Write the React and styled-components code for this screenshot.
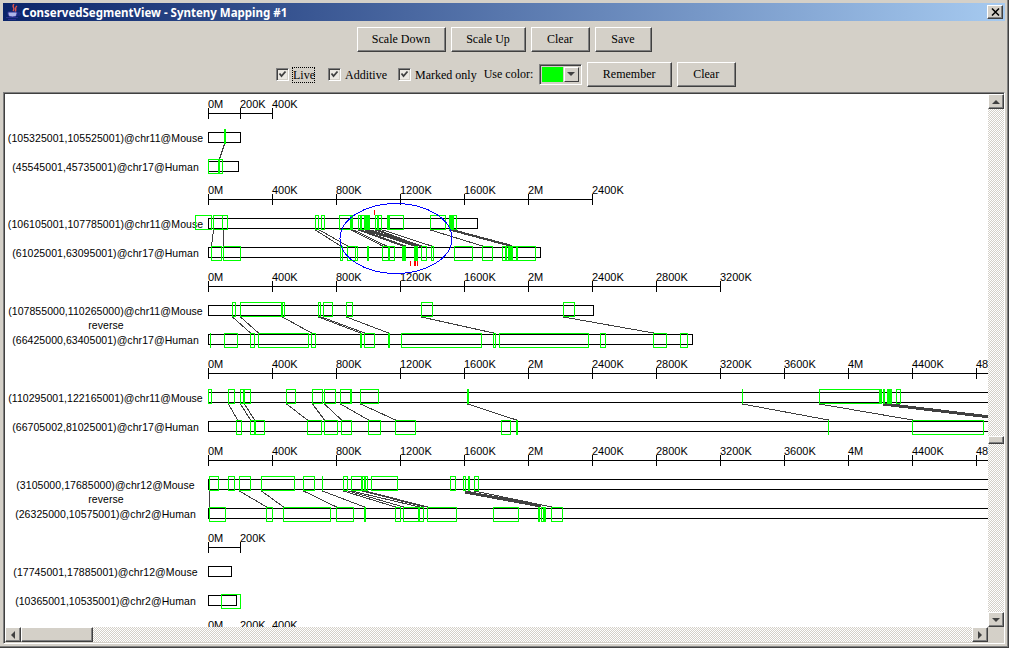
import React from 'react'
import styled, { createGlobalStyle } from 'styled-components'

const GlobalStyle = createGlobalStyle`
  html, body { margin: 0; padding: 0; background: #d4d0c8; }
  #root { width: 1009px; height: 648px; overflow: hidden; }
`

const checker = `
  background-color: #fff;
  background-image: conic-gradient(#d4d0c8 25%, #fff 0 50%, #d4d0c8 0 75%, #fff 0);
  background-size: 2px 2px;
`

const Window = styled.div`
  box-sizing: border-box;
  width: 1009px;
  height: 648px;
  display: flex;
  flex-direction: column;
  padding: 3px;
  background: #d4d0c8;
  border-right: 1px solid #404040;
  border-bottom: 1px solid #404040;
  box-shadow: inset -1px -1px 0 #808080;
`

const TitleBar = styled.div`
  height: 18px;
  flex: none;
  display: flex;
  align-items: center;
  padding: 0 2px;
  background: linear-gradient(90deg, #0a246a, #a6caf0);
`

const TitleIcon = styled.svg`
  width: 16px;
  height: 16px;
  flex: none;
`

const TitleText = styled.span`
  flex: 1;
  margin-left: 1px;
  font: bold 11.5px "Noto Sans", sans-serif;
  color: #fff;
  white-space: nowrap;
`

const CloseButton = styled.div`
  box-sizing: border-box;
  width: 16px;
  height: 14px;
  display: flex;
  align-items: center;
  justify-content: center;
  background: #d4d0c8;
  border: 1px solid;
  border-color: #fff #404040 #404040 #fff;
  box-shadow: inset -1px -1px 0 #808080;
`

const Toolbar = styled.div`
  flex: none;
  height: 36px;
  display: flex;
  justify-content: center;
  align-items: center;
  gap: 5px;
`

const OptionsBar = styled.div`
  flex: none;
  height: 35px;
  display: flex;
  align-items: center;
  padding-left: 273px;
`

const Button = styled.div`
  box-sizing: border-box;
  flex: none;
  width: ${({ w }) => w}px;
  height: 25px;
  margin-left: ${({ ml }) => ml || 0}px;
  display: flex;
  align-items: center;
  justify-content: center;
  background: #d4d0c8;
  border: 1px solid;
  border-color: #fff #404040 #404040 #fff;
  box-shadow: inset -1px -1px 0 #808080;
  font: 12px "Liberation Serif", serif;
  color: #000;
`

const CheckItem = styled.div`
  flex: none;
  display: flex;
  align-items: center;
  gap: 4px;
  margin-right: ${({ mr }) => mr}px;
  font: 12px "Liberation Serif", serif;
  color: #000;
`

const CheckBox = styled.div`
  box-sizing: border-box;
  width: 13px;
  height: 13px;
  display: flex;
  align-items: center;
  justify-content: center;
  background: #ece9e3;
  border: 1px solid;
  border-color: #808080 #fff #fff #808080;
  box-shadow: inset 1px 1px 0 #404040, inset -1px -1px 0 #d4d0c8;
`

const CheckLabel = styled.span`
  ${({ focused }) => focused && 'outline: 1px dotted #000; width: 21px;'}
  line-height: 14px;
  white-space: nowrap;
`

const ColorLabel = styled.span`
  flex: none;
  width: 55px;
  font: 12px "Liberation Serif", serif;
  color: #000;
  white-space: nowrap;
`

const Combo = styled.div`
  box-sizing: border-box;
  flex: none;
  width: 43px;
  height: 21px;
  display: flex;
  align-items: center;
  padding: 1px 2px;
  gap: 1px;
  border: 1px solid;
  border-color: #808080 #fff #fff #808080;
  box-shadow: inset 1px 1px 0 #404040;
  background: #d4d0c8;
`

const Swatch = styled.div`
  width: 21px;
  height: 15px;
  flex: none;
  background: #00ff00;
`

const ComboArrow = styled.div`
  box-sizing: border-box;
  width: 16px;
  height: 15px;
  display: flex;
  align-items: center;
  justify-content: center;
  border: 1px solid;
  border-color: #fff #404040 #404040 #fff;
`

const Viewport = styled.div`
  box-sizing: border-box;
  flex: 1;
  width: 1002px;
  display: grid;
  grid-template-columns: 983px 16px;
  grid-template-rows: 533px 15px;
  padding: 1px 0 0 1px;
  border: 1px solid;
  border-color: #808080 #fff #fff #808080;
  box-shadow: inset 1px 1px 0 #404040;
`

const Canvas = styled.svg`
  display: block;
  background: #fff;
`

const VScroll = styled.div`
  display: flex;
  flex-direction: column;
  ${checker}
`

const HScroll = styled.div`
  display: flex;
  ${checker}
`

const ScrollButton = styled.div`
  box-sizing: border-box;
  flex: none;
  width: 16px;
  height: 15px;
  display: flex;
  align-items: center;
  justify-content: center;
  background: #d4d0c8;
  border: 1px solid;
  border-color: #fff #404040 #404040 #fff;
  box-shadow: inset -1px -1px 0 #808080;
`

const ScrollThumb = styled.div`
  box-sizing: border-box;
  flex: none;
  background: #d4d0c8;
  border: 1px solid;
  border-color: #fff #404040 #404040 #fff;
  box-shadow: inset -1px -1px 0 #808080;
  ${({ vertical }) => vertical
    ? 'height: 8px; margin-top: 327px;'
    : 'width: 72px;'}
`

const Spacer = styled.div`
  flex: 1;
`

const Corner = styled.div`
  background: #d4d0c8;
`

const AxisText = styled.text`
  font: 11px "Liberation Sans", sans-serif;
`

const NameText = styled.text`
  font: 10.5px "Liberation Sans", sans-serif;
  letter-spacing: 0.06px;
`

const axisLabel = (i, step) => {
  const k = i * step
  if (k === 0) return '0M'
  if (k % 2000 === 0) return `${k / 1000}M`
  return `${k}K`
}

const rows = [
  {
    axis: 113, ticks: 3, step: 200, end: 272, top: 46, bars: [240, 238],
    name: ['(105325001,105525001)@chr11@Mouse', '(45545001,45735001)@chr17@Human'],
    upper: [[224, 226, 1]],
    lower: [[208, 219], [219, 223]],
    links: [[224, 219]]
  },
  {
    axis: 199, ticks: 7, step: 400, end: 592, top: 47, bars: [477, 540],
    name: ['(106105001,107785001)@chr11@Mouse', '(61025001,63095001)@chr17@Human'],
    upper: [[195, 212], [213, 223], [222, 228], [315, 319], [321, 325], [339, 351], [351, 353, 1], [358, 361], [361, 365], [365, 370, 1], [375, 378], [378, 382], [387, 388], [389, 404], [430, 446], [449, 453, 1], [453, 457]],
    lower: [[211, 222], [223, 241], [340, 343], [347, 358], [355, 358], [367, 369, 1], [382, 389], [389, 395], [402, 406, 1], [414, 415], [416, 418], [421, 427], [431, 434], [454, 473], [482, 493], [502, 506], [506, 509], [509, 512, 1], [512, 517], [517, 536]],
    links: [[213, 211], [223, 223], [315, 340], [319, 347], [351, 382], [353, 386], [358, 402], [361, 405], [365, 414], [368, 416], [370, 421], [375, 418], [378, 420], [382, 431], [430, 482], [453, 510], [451, 510], [449, 509]],
    heavy: [[[367, 231], [421, 246], 2], [[456, 231], [512, 246], 2]]
  },
  {
    axis: 286, ticks: 9, step: 400, end: 720, top: 47, bars: [593, 692], reverse: true,
    name: ['(107855000,110265000)@chr11@Mouse', '(66425000,63405001)@chr17@Human'],
    upper: [[232, 236], [240, 282], [282, 285], [318, 321], [323, 333], [346, 353], [421, 433], [563, 575]],
    lower: [[210, 211, 1], [224, 238], [250, 255], [258, 309], [311, 316], [360, 362, 1], [364, 375], [388, 390, 1], [401, 482], [493, 496], [499, 589], [600, 606], [653, 667], [680, 688]],
    links: [[232, 250], [240, 258], [282, 311], [318, 360], [321, 364], [346, 388], [421, 493], [563, 653]]
  },
  {
    axis: 373, ticks: 13, step: 400, end: 988, top: 47, bars: [1000, 1000],
    name: ['(110295001,122165001)@chr11@Mouse', '(66705002,81025001)@chr17@Human'],
    upper: [[208, 212], [228, 235], [240, 244], [244, 251], [286, 296], [312, 323], [324, 336], [340, 351], [350, 351], [360, 379], [467, 469, 1], [742, 743, 1], [819, 880], [879, 882, 1], [883, 885], [887, 892, 1], [896, 901]],
    lower: [[236, 242], [250, 255], [255, 265], [307, 322], [324, 338], [341, 352], [368, 381], [395, 416], [501, 511], [516, 518, 1], [828, 829, 1], [912, 984]],
    links: [[228, 237], [240, 250], [244, 254], [286, 307], [312, 324], [324, 341], [340, 368], [360, 395], [467, 516], [742, 828], [819, 912]],
    heavy: [[[883, 404], [990, 417], 3]]
  },
  {
    axis: 460, ticks: 13, step: 400, end: 988, top: 47, bars: [1000, 1000], reverse: true,
    name: ['(3105000,17685000)@chr12@Mouse', '(26325000,10575001)@chr2@Human'],
    upper: [[209, 219], [228, 235], [239, 251], [261, 295], [303, 315], [322, 323, 1], [343, 348], [351, 362], [362, 365], [365, 368], [371, 398], [450, 456], [463, 466], [468, 470, 1], [474, 479]],
    lower: [[209, 226], [266, 273], [283, 331], [336, 354], [364, 366, 1], [395, 401], [403, 419], [419, 424], [427, 457], [493, 519], [538, 540, 1], [541, 544], [544, 546], [551, 563]],
    links: [[209, 209], [239, 266], [261, 283], [303, 336], [322, 364], [343, 395], [348, 403], [351, 419], [362, 424], [365, 427], [474, 551]],
    heavy: [[[465, 492], [541, 506], 3]]
  },
  {
    axis: 547, ticks: 2, step: 200, end: 240, top: 47, bars: [231, 236],
    name: ['(17745001,17885001)@chr12@Mouse', '(10365001,10535001)@chr2@Human'],
    upper: [],
    lower: [[221, 241]],
    links: []
  }
]

const Segment = ({ seg, y }) => {
  const [a, b, filled] = seg
  if (filled) {
    return <rect x={a} y={y} width={b - a} height={15} fill="#00ff00" />
  }
  return (
    <rect x={a + 0.5} y={y + 0.5} width={Math.max(b - a - 1, 1)} height={14} fill="none" stroke="#00ff00" />
  )
}

const Axis = ({ y, ticks, step, end }) => (
  <g>
    <line x1={208} x2={end} y1={y + 0.5} y2={y + 0.5} stroke="#000" />
    {Array.from({ length: ticks }, (_, i) => {
      const x = 208 + (i * step * 64) / 400
      return (
        <g key={i}>
          <line x1={x + 0.5} x2={x + 0.5} y1={y - 5} y2={y + 6} stroke="#000" />
          <AxisText x={x} y={y - 5}>{axisLabel(i, step)}</AxisText>
        </g>
      )
    })}
  </g>
)

const Row = ({ row }) => {
  const { axis, top } = row
  const barA = axis + 19
  const barB = axis + 48
  const upperY = axis + 16
  const lowerY = axis + top
  return (
    <g>
      <Axis y={axis} ticks={row.ticks} step={row.step} end={row.end} />
      <NameText x={105.5} y={barA + 10} textAnchor="middle">{row.name[0]}</NameText>
      {row.reverse && <NameText x={106} y={barA + 24} textAnchor="middle">reverse</NameText>}
      <NameText x={105.5} y={barB + 10} textAnchor="middle">{row.name[1]}</NameText>
      <rect x={208.5} y={barA + 0.5} width={row.bars[0] - 208} height={10} fill="#fff" stroke="#000" />
      <rect x={208.5} y={barB + 0.5} width={row.bars[1] - 208} height={10} fill="#fff" stroke="#000" />
      {row.links.map(([a, b], i) => (
        <line key={i} x1={a + 0.5} y1={upperY + 15} x2={b + 0.5} y2={lowerY} stroke="#404040" />
      ))}
      {(row.heavy || []).map(([p, q, w], i) => (
        <line key={i} x1={p[0]} y1={p[1]} x2={q[0]} y2={q[1]} stroke="#404040" strokeWidth={w} />
      ))}
      {row.upper.map((s, i) => <Segment key={i} seg={s} y={upperY} />)}
      {row.lower.map((s, i) => <Segment key={i} seg={s} y={lowerY} />)}
    </g>
  )
}

const Check = () => (
  <svg width="9" height="9" viewBox="0 0 9 9">
    <path d="M1.5 3.5 L3.5 6 L7.5 1.5" fill="none" stroke="#404040" strokeWidth="1.8" />
  </svg>
)

const Arrow = ({ dir }) => {
  const points = {
    up: '0,6 8,6 4,2',
    down: '0,2 8,2 4,6',
    left: '6,0 6,8 2,4',
    right: '2,0 2,8 6,4'
  }
  return (
    <svg width="8" height="8" viewBox="0 0 8 8">
      <polygon points={points[dir]} fill="#404040" />
    </svg>
  )
}

const JavaIcon = () => (
  <TitleIcon viewBox="0 0 16 16">
    <path d="M9 0 C6 3 11 4 8 7 M12 2 C9 4 12 6 10 8" fill="none" stroke="#e0554d" strokeWidth="1.4" />
    <path d="M3 8 H12 V10 C12 12 10 13 7.5 13 C5 13 3 12 3 10 Z" fill="#aeb4e8" stroke="#2b2f8f" strokeWidth="1" />
    <path d="M12 9 H15 V11 H11.5" fill="none" stroke="#2b2f8f" />
    <path d="M1 13.5 H13 M3 15.5 H11" stroke="#2b2f8f" strokeWidth="1" />
  </TitleIcon>
)

const Chart = () => (
  <Canvas width="983" height="533" viewBox="5 94 983 533" shapeRendering="crispEdges">
    {rows.map((row) => <Row key={row.axis} row={row} />)}
    <Axis y={634} ticks={3} step={200} end={272} />
    <rect x={374} y={210} width={1} height={5} fill="#ff0000" />
    <rect x={410} y={261} width={1} height={5} fill="#ff0000" />
    <rect x={414} y={261} width={2} height={5} fill="#ff0000" />
    <rect x={417} y={261} width={1} height={5} fill="#ff0000" />
    <ellipse cx={396} cy={238.5} rx={56} ry={35} fill="none" stroke="#0000ff" />
  </Canvas>
)

export default function App () {
  return (
    <Window>
      <GlobalStyle />
      <TitleBar>
        <JavaIcon />
        <TitleText>ConservedSegmentView - Synteny Mapping #1</TitleText>
        <CloseButton>
          <svg width="9" height="8" viewBox="0 0 9 8">
            <path d="M1 0.5 L8 7.5 M8 0.5 L1 7.5" stroke="#000" strokeWidth="1.5" />
          </svg>
        </CloseButton>
      </TitleBar>
      <Toolbar>
        <Button w={89}>Scale Down</Button>
        <Button w={75}>Scale Up</Button>
        <Button w={59}>Clear</Button>
        <Button w={57}>Save</Button>
      </Toolbar>
      <OptionsBar>
        <CheckItem mr={14}><CheckBox><Check /></CheckBox><CheckLabel focused>Live</CheckLabel></CheckItem>
        <CheckItem mr={11}><CheckBox><Check /></CheckBox><CheckLabel>Additive</CheckLabel></CheckItem>
        <CheckItem mr={7}><CheckBox><Check /></CheckBox><CheckLabel>Marked only</CheckLabel></CheckItem>
        <ColorLabel>Use color:</ColorLabel>
        <Combo>
          <Swatch />
          <ComboArrow>
            <svg width="8" height="5" viewBox="0 0 8 5"><polygon points="0,0 8,0 4,4" fill="#404040" /></svg>
          </ComboArrow>
        </Combo>
        <Button w={85} ml={5}>Remember</Button>
        <Button w={59} ml={5}>Clear</Button>
      </OptionsBar>
      <Viewport>
        <Chart />
        <VScroll>
          <ScrollButton><Arrow dir="up" /></ScrollButton>
          <ScrollThumb vertical />
          <Spacer />
          <ScrollButton><Arrow dir="down" /></ScrollButton>
        </VScroll>
        <HScroll>
          <ScrollButton><Arrow dir="left" /></ScrollButton>
          <ScrollThumb />
          <Spacer />
          <ScrollButton><Arrow dir="right" /></ScrollButton>
        </HScroll>
        <Corner />
      </Viewport>
    </Window>
  )
}
